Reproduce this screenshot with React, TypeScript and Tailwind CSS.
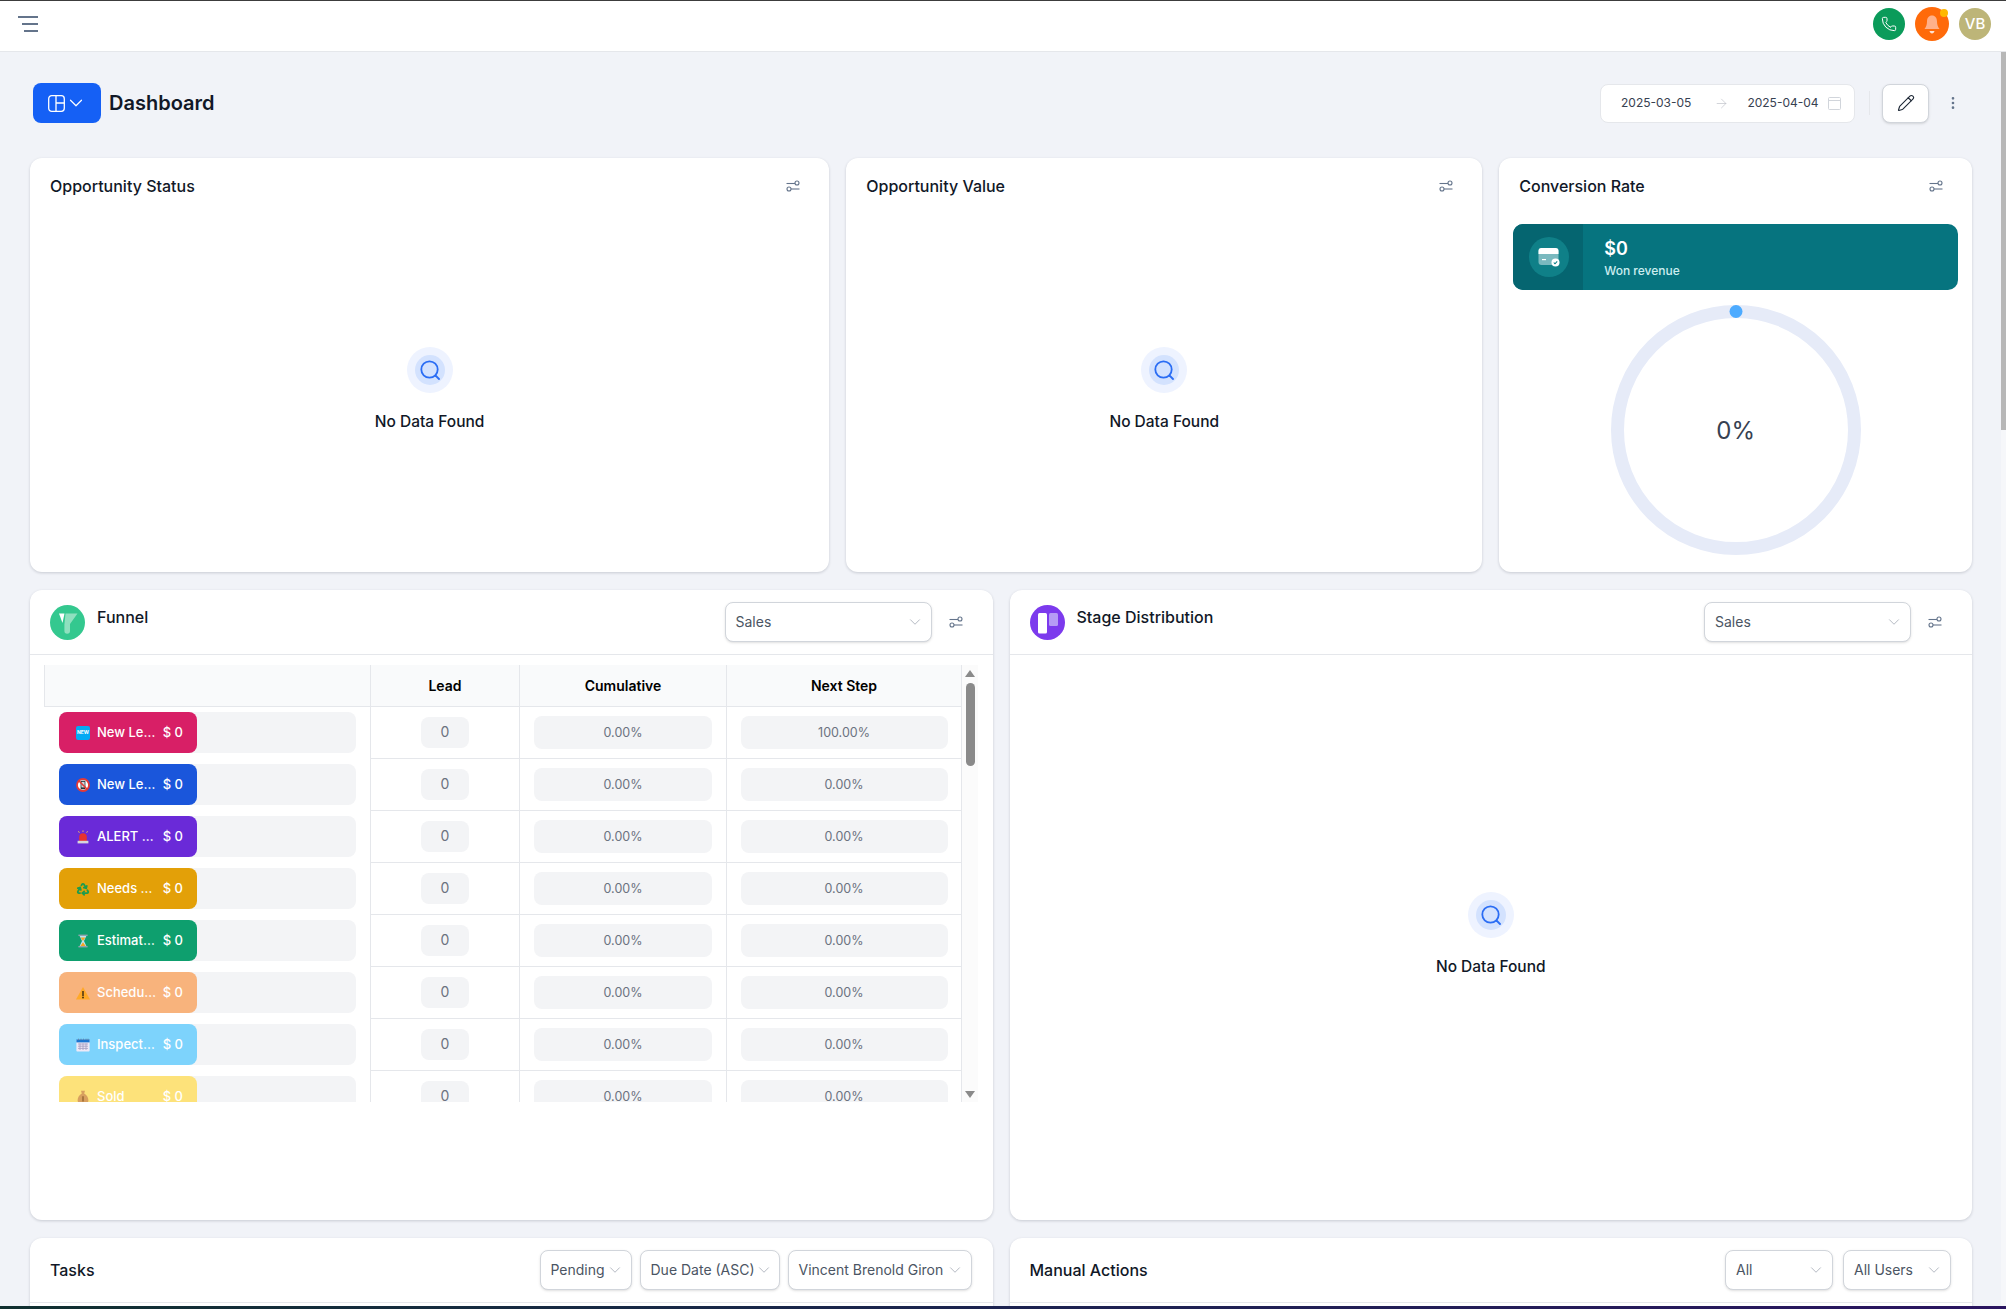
import type { ReactNode } from "react";
import { ArrowRight, ChevronDown, EllipsisVertical, Pencil, Phone, Recycle } from "lucide-react";

const FilterIcon = () => (
  <svg width="14" height="12" viewBox="0 0 14 12" fill="none" stroke="#64748b" strokeWidth="1.1">
    <path d="M0.5 3.5H9" />
    <circle cx="11" cy="3" r="2" />
    <path d="M5 9H13.5" />
    <circle cx="3" cy="9" r="2" />
  </svg>
);

const NoData = () => (
  <div className="flex flex-col items-center">
    <div className="flex h-[46px] w-[46px] items-center justify-center rounded-full bg-[#eef3ff]">
      <div className="flex h-[30px] w-[30px] items-center justify-center rounded-full bg-[#d3e2fe]">
        <svg width="20" height="20" viewBox="0 0 20 20" fill="none" stroke="#2a6df4" strokeWidth="1.8" strokeLinecap="round">
          <circle cx="9.5" cy="9.5" r="8.2" />
          <path d="M15.5 15.5L19 19" />
        </svg>
      </div>
    </div>
    <p className="mt-[19px] text-[15.5px] leading-[20px] font-medium text-[#111827]">No Data Found</p>
  </div>
);

const Select = ({ label, className }: { label: string; className: string }) => (
  <div
    className={`flex h-10 items-center justify-between rounded-lg border border-[#d1d5db] bg-white pl-[10px] pr-[7px] text-sm text-[#4b5563] shadow-sm ${className}`}
  >
    <span className="whitespace-nowrap">{label}</span>
    <ChevronDown size={18} strokeWidth={1} className="shrink-0 text-[#9ca3af]" />
  </div>
);

const NewIcon = () => (
  <div className="flex h-[14px] w-[14px] items-center justify-center rounded-[2px] bg-[#03a9f4] text-[5px] font-bold text-white">
    NEW
  </div>
);

const NoPhoneIcon = () => (
  <svg width="14" height="14" viewBox="0 0 14 14">
    <circle cx="7" cy="7" r="6" fill="#fff" stroke="#e53935" strokeWidth="1.8" />
    <rect x="4.6" y="2.8" width="4.8" height="8.4" rx="0.8" fill="#263238" />
    <rect x="5.4" y="3.8" width="3.2" height="5.6" fill="#cfd8dc" />
    <path d="M2.8 2.8L11.2 11.2" stroke="#e53935" strokeWidth="1.6" />
  </svg>
);

const SirenIcon = () => (
  <svg width="14" height="14" viewBox="0 0 14 14">
    <path d="M3.2 11V7a3.8 3.8 0 0 1 7.6 0v4z" fill="#e8322e" />
    <rect x="1.6" y="10.8" width="10.8" height="2.6" fill="#d5d5dc" />
    <path d="M7 0.4V2M2.4 1.2L3.4 2.8M11.6 1.2L10.6 2.8" stroke="#f3c05b" strokeWidth="0.9" />
  </svg>
);

const HourglassIcon = () => (
  <svg width="14" height="14" viewBox="0 0 14 14">
    <path d="M3.4 1.6H10.6L8 7L10.6 12.4H3.4L6 7z" fill="#b7e3f4" />
    <path d="M4.6 3.6H9.4L7 7zM7 8.2L10 12.4H4z" fill="#f5a623" />
    <rect x="2.4" y="0.6" width="9.2" height="1.4" fill="#90a4ae" />
    <rect x="2.4" y="12" width="9.2" height="1.4" fill="#90a4ae" />
  </svg>
);

const WarningIcon = () => (
  <svg width="14" height="14" viewBox="0 0 14 14">
    <path d="M7 1L14 13.4H0z" fill="#ffa928" />
    <rect x="6.3" y="5" width="1.4" height="5" fill="#3a2a10" />
    <circle cx="7" cy="11.5" r="0.9" fill="#3a2a10" />
  </svg>
);

const CalendarIcon = () => (
  <svg width="14" height="14" viewBox="0 0 14 14">
    <rect x="0.4" y="1.4" width="13.2" height="12.2" rx="0.8" fill="#eee9f7" />
    <rect x="0.4" y="1.4" width="13.2" height="3" fill="#1976d2" />
    <path d="M2.5 0.6V2.4M5 0.6V2.4M7.5 0.6V2.4M10 0.6V2.4M12 0.6V2.4" stroke="#607d8b" strokeWidth="0.6" />
    <path d="M2 6H12M2 8.2H12M2 10.4H12M4 5.4V12M7 5.4V12M10 5.4V12" stroke="#a29cc0" strokeWidth="0.8" />
  </svg>
);

const MoneyBagIcon = () => (
  <svg width="14" height="14" viewBox="0 0 14 14">
    <path d="M5 0.8H9L8.2 3.6C10.6 5 12.4 7.6 12.4 10.2C12.4 12.6 10.4 13.6 7 13.6C3.6 13.6 1.6 12.6 1.6 10.2C1.6 7.6 3.4 5 5.8 3.6z" fill="#d8a05f" />
    <path d="M7 6.2V11.4" stroke="#8a5a2b" strokeWidth="1.2" />
  </svg>
);

const stages: { name: string; color: string; icon: ReactNode; next: string }[] = [
  { name: "New Le…", color: "bg-[#d81f66]", icon: <NewIcon />, next: "100.00%" },
  { name: "New Le…", color: "bg-[#1a56db]", icon: <NoPhoneIcon />, next: "0.00%" },
  { name: "ALERT …", color: "bg-[#6a2ad8]", icon: <SirenIcon />, next: "0.00%" },
  {
    name: "Needs …",
    color: "bg-[#e3a008]",
    icon: <Recycle size={14} strokeWidth={3} className="text-[#1b9c4f]" />,
    next: "0.00%",
  },
  { name: "Estimat…", color: "bg-[#0e9f6e]", icon: <HourglassIcon />, next: "0.00%" },
  { name: "Schedu…", color: "bg-[#f8b37c]", icon: <WarningIcon />, next: "0.00%" },
  { name: "Inspect…", color: "bg-[#7dd3fc]", icon: <CalendarIcon />, next: "0.00%" },
  { name: "Sold", color: "bg-[#fde27a]", icon: <MoneyBagIcon />, next: "0.00%" },
];

const FunnelTable = () => (
  <div className="flex h-[437px] overflow-hidden">
    <div className="w-[918px]">
      {/* Header */}
      <div className="grid h-[42px] grid-cols-[326px_149px_207px_236px] border-b border-[#e5e7eb] bg-[#f9fafb] text-sm font-semibold text-black">
        <div className="border-l border-[#e5e7eb]" />
        <div className="flex items-center justify-center border-l border-[#e5e7eb]">Lead</div>
        <div className="flex items-center justify-center border-l border-[#e5e7eb]">Cumulative</div>
        <div className="flex items-center justify-center border-x border-[#e5e7eb]">Next Step</div>
      </div>
      {/* Stages */}
      {stages.map((s, i) => (
        <div key={i} className="grid h-[52px] grid-cols-[326px_149px_207px_236px] text-[12.5px] text-[#6b7280]">
          <div className="flex items-center pl-[15px] pb-px">
            <div className="h-[41px] w-[297px] rounded-lg bg-[#f3f4f6]">
              <div className={`flex h-[41px] w-[138px] items-center rounded-lg pl-[17px] pr-[14px] pt-px text-[13px] font-medium text-white ${s.color}`}>
                <span className="flex w-[14px] shrink-0 items-center justify-center">{s.icon}</span>
                <span className="ml-[7px] flex-1 whitespace-nowrap">{s.name}</span>
                <span className="whitespace-nowrap">$ 0</span>
              </div>
            </div>
          </div>
          <div className="flex items-center justify-center border-b border-l border-[#e5e7eb]">
            <div className="flex h-[31px] w-12 items-center justify-center rounded-lg bg-[#f3f4f6] pb-px text-sm">0</div>
          </div>
          <div className="flex items-center justify-center border-b border-l border-[#e5e7eb]">
            <div className="flex h-[33px] w-[178px] items-center justify-center rounded-lg bg-[#f3f4f6] pt-px">0.00%</div>
          </div>
          <div className="flex items-center justify-center border-x border-b border-[#e5e7eb]">
            <div className="flex h-[33px] w-[207px] items-center justify-center rounded-lg bg-[#f3f4f6] pt-px">{s.next}</div>
          </div>
        </div>
      ))}
    </div>
    {/* Scrollbar of the table */}
    <div className="flex w-4 flex-col items-center bg-[#fbfbfb] pt-[5px] pb-[4px]">
      <svg width="10" height="7" viewBox="0 0 10 7" fill="#8a8a8a">
        <path d="M5 0L10 7H0z" />
      </svg>
      <div className="mt-[6px] h-[83px] w-[9px] rounded-full bg-[#8a8a8a]" />
      <svg width="10" height="7" viewBox="0 0 10 7" fill="#8a8a8a" className="mt-auto">
        <path d="M5 7L10 0H0z" />
      </svg>
    </div>
  </div>
);

const Card = ({ className, children }: { className: string; children: ReactNode }) => (
  <div className={`flex flex-col rounded-xl bg-white shadow-[0_1px_3px_rgba(15,23,42,0.18)] ${className}`}>{children}</div>
);

const SimpleHeader = ({ title }: { title: string }) => (
  <div className="flex h-[56px] items-center justify-between pl-5 pr-[29px]">
    <h3 className="text-base font-medium text-[#111827]">{title}</h3>
    <FilterIcon />
  </div>
);

const IconHeader = ({ title, icon }: { title: string; icon: ReactNode }) => (
  <div className="flex h-[65px] shrink-0 items-center border-b border-[#e5e7eb] pl-5 pr-[30px]">
    {icon}
    <h3 className="mb-[10px] ml-3 text-base font-medium text-[#111827]">{title}</h3>
    <Select label="Sales" className="ml-auto w-[207px]" />
    <span className="ml-[17px]">
      <FilterIcon />
    </span>
  </div>
);

export default function App() {
  return (
    <div className="flex h-[1309px] w-[2006px] flex-col overflow-hidden bg-[#f1f3f8] [font-family:Inter,sans-serif]">
      {/* Top bar */}
      <header className="flex h-[52px] shrink-0 items-center border-t border-b border-t-[#3c3c3c] border-b-[#e5e7eb] bg-white pb-[4px] pl-[18px] pr-[15px]">
        <svg width="20" height="16" viewBox="0 0 20 16" stroke="#64748b" strokeWidth="2">
          <path d="M0 1H20M4 8H20M6 15H20" />
        </svg>
        <div className="ml-auto flex items-center">
          <div className="flex h-8 w-8 items-center justify-center rounded-full bg-[#0b9b5a]">
            <Phone size={16} strokeWidth={1.5} className="text-white" />
          </div>
          <div className="relative ml-[10px] flex h-[34px] w-[34px] items-center justify-center rounded-full bg-[#ff6a0a]">
            <svg width="16" height="19" viewBox="0 0 16 19" fill="#ffb08a">
              <path d="M8 0.5C4.8 0.5 3 3 3 6.5C3 10 2 12 0.5 14H15.5C14 12 13 10 13 6.5C13 3 11.2 0.5 8 0.5z" />
              <path d="M5.5 16H10.5C10.2 17.5 9.2 18.4 8 18.4C6.8 18.4 5.8 17.5 5.5 16z" fill="#ffe3d3" />
            </svg>
            <span className="absolute right-[1px] top-[2px] h-2 w-2 rounded-full bg-[#ffb800]" />
          </div>
          <div className="ml-[10px] flex h-8 w-8 items-center justify-center rounded-full bg-[#bdb578] text-[15px] font-medium text-white">
            VB
          </div>
        </div>
      </header>

      <div className="flex min-h-0 flex-1">
        <main className="min-w-0 flex-1 overflow-hidden pl-[30px] pr-[29px] pt-[31px]">
          {/* Page heading */}
          <div className="flex h-10 items-center pl-[3px] pr-[11px]">
            <button className="flex h-10 w-[68px] items-center justify-center rounded-lg bg-[#1560f5]">
              <svg width="17" height="17" viewBox="0 0 17 17" fill="none" stroke="#fff" strokeWidth="1.3">
                <rect x="0.7" y="0.7" width="15.6" height="15.6" rx="3" />
                <path d="M8 0.7V16.3M8 8H16.3" />
              </svg>
              <ChevronDown size={22} strokeWidth={1.3} className="text-white" />
            </button>
            <h1 className="ml-2 text-xl font-semibold text-[#111827]">Dashboard</h1>

            <div className="ml-auto flex h-[39px] w-[255px] items-center rounded-lg border border-[#e5e7eb] bg-white pl-[20px] text-xs whitespace-nowrap text-[#374151]">
              <span>2025-03-05</span>
              <ArrowRight size={15} strokeWidth={1} className="ml-[23px] shrink-0 text-[#b8bcc4]" />
              <span className="ml-[18px]">2025-04-04</span>
              <svg width="13" height="13" viewBox="0 0 13 13" fill="none" stroke="#d1d5db" className="ml-[9px] shrink-0">
                <rect x="0.5" y="0.5" width="12" height="12" rx="1" />
                <path d="M0.5 3.5H12.5" />
              </svg>
            </div>
            <div className="ml-[14px] h-6 w-px bg-[#e5e7eb]" />
            <button className="ml-3 flex h-[39px] w-[47px] items-center justify-center rounded-lg border border-[#d1d5db] bg-white shadow-sm">
              <Pencil size={18} strokeWidth={1.5} className="text-[#1f2937]" />
            </button>
            <EllipsisVertical size={16} strokeWidth={2} className="ml-4 text-[#64748b]" />
          </div>

          <div className="mt-[35px] grid grid-cols-12 gap-x-[17px] gap-y-[18px]">
            <Card className="col-span-5 h-[414px]">
              <SimpleHeader title="Opportunity Status" />
              <div className="flex flex-1 items-center justify-center pb-[8px]">
                <NoData />
              </div>
            </Card>
            <Card className="col-span-4 h-[414px]">
              <SimpleHeader title="Opportunity Value" />
              <div className="flex flex-1 items-center justify-center pb-[8px]">
                <NoData />
              </div>
            </Card>
            <Card className="col-span-3 h-[414px]">
              <SimpleHeader title="Conversion Rate" />
              <div className="px-[14px] pt-[10px]">
                {/* Won revenue banner */}
                <div className="flex h-[66px] overflow-hidden rounded-[10px] bg-[#06747f]">
                  <div className="flex w-[70px] items-center justify-center bg-[#056570] pl-[2px]">
                    <div className="flex h-10 w-10 items-center justify-center rounded-full bg-[#0f8088]">
                      <svg width="22" height="20" viewBox="0 0 22 20">
                        <rect x="0.5" y="1" width="20" height="17" rx="3" fill="#7ab9bf" />
                        <path d="M0.5 7V4a3 3 0 0 1 3-3h14a3 3 0 0 1 3 3v3z" fill="#fff" />
                        <rect x="4" y="12" width="4" height="1.2" fill="#fff" />
                        <circle cx="17.5" cy="15.5" r="4" fill="#fff" />
                        <path d="M15.8 15.5L17 16.8L19.2 14.4" stroke="#0f8088" strokeWidth="1.1" fill="none" />
                      </svg>
                    </div>
                  </div>
                  <div className="flex flex-col justify-center pl-[21px] pt-px">
                    <span className="text-lg leading-[26px] font-semibold text-white">$0</span>
                    <span className="text-xs leading-[18px] font-medium text-[#cdeef0]">Won revenue</span>
                  </div>
                </div>
                {/* Ring */}
                <div className="mt-[15px] flex justify-center">
                  <div className="relative flex h-[250px] w-[250px] items-center justify-center rounded-full border-[13px] border-[#e6ebf8]">
                    <span className="pt-[2px] text-2xl text-[#374151]">0%</span>
                    <span className="absolute left-1/2 top-[-13px] h-[13px] w-[13px] -translate-x-1/2 rounded-full bg-[#4dabff]" />
                  </div>
                </div>
              </div>
            </Card>

            <Card className="col-span-6 h-[630px]">
              <IconHeader
                title="Funnel"
                icon={
                  <svg width="35" height="35" viewBox="0 0 35 35">
                    <circle cx="17.5" cy="17.5" r="17.5" fill="#34c88f" />
                    <path d="M9 8.5H14.5L12.5 18z" fill="#fff" />
                    <path d="M15.5 8.5H27.5L20 19V26a2.8 2.8 0 0 1-5.6 0V19.5z" fill="#8fe0bf" />
                  </svg>
                }
              />
              <div className="px-[14px] pt-[10px]">
                <FunnelTable />
              </div>
            </Card>
            <Card className="col-span-6 h-[630px]">
              <IconHeader
                title="Stage Distribution"
                icon={
                  <svg width="35" height="35" viewBox="0 0 35 35">
                    <circle cx="17.5" cy="17.5" r="17.5" fill="#7c3aed" />
                    <rect x="8" y="8" width="9" height="20.5" rx="1.5" fill="#fff" />
                    <rect x="19" y="8" width="9" height="13" rx="1.5" fill="#b69cf5" />
                  </svg>
                }
              />
              <div className="flex flex-1 items-center justify-center pb-[6px]">
                <NoData />
              </div>
            </Card>

            <Card className="col-span-6 h-[100px]">
              <div className="flex h-[65px] items-center border-b border-[#e5e7eb] pl-5 pr-[21px]">
                <h3 className="text-base font-medium text-[#111827]">Tasks</h3>
                <div className="ml-auto flex gap-2">
                  <Select label="Pending" className="w-[92px]" />
                  <Select label="Due Date (ASC)" className="w-[140px]" />
                  <Select label="Vincent Brenold Giron" className="w-[184px]" />
                </div>
              </div>
            </Card>
            <Card className="col-span-6 h-[100px]">
              <div className="flex h-[65px] items-center border-b border-[#e5e7eb] pl-5 pr-[21px]">
                <h3 className="text-base font-medium text-[#111827]">Manual Actions</h3>
                <div className="ml-auto flex gap-[10px]">
                  <Select label="All" className="w-[108px]" />
                  <Select label="All Users" className="w-[108px]" />
                </div>
              </div>
            </Card>
          </div>
        </main>

        {/* Page scrollbar */}
        <div className="w-[5px] shrink-0 bg-[#f6f7fa]">
          <div className="h-[378px] bg-[#b7b7b7]" />
        </div>
      </div>

      {/* Strip of the desktop below the window */}
      <div className="h-[3px] shrink-0 bg-gradient-to-r from-[#103030] via-[#1c2350] to-[#2a1460]" />
    </div>
  );
}
